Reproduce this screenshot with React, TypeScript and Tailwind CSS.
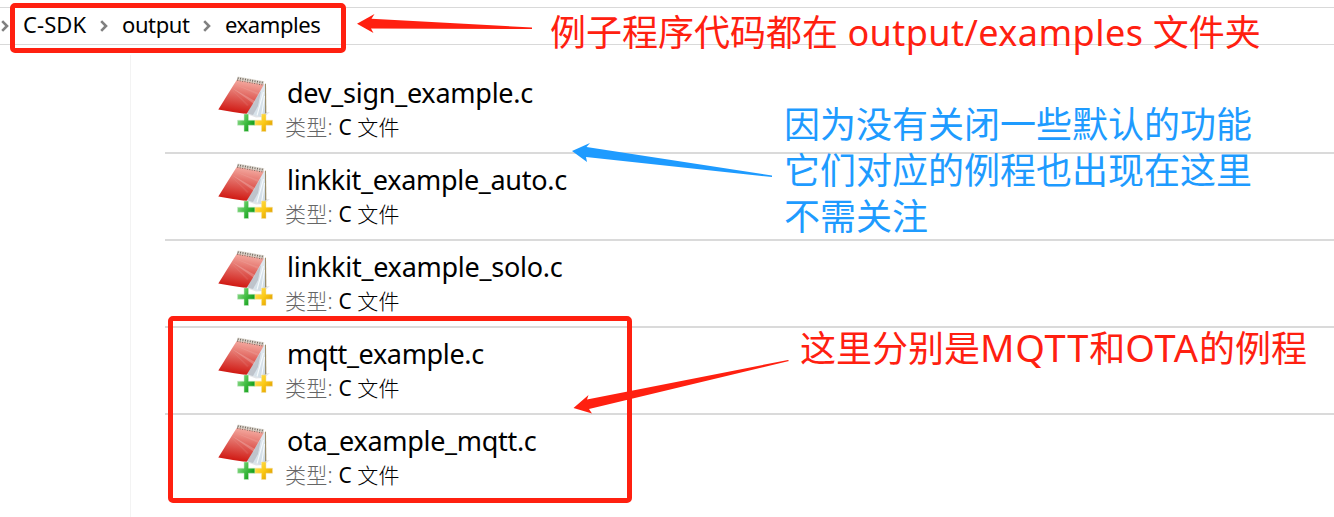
import type { ReactNode } from "react";

type FileEntry = { name: string; tracking: string };

const files: FileEntry[] = [
  { name: "dev_sign_example.c", tracking: "tracking-[-0.25px]" },
  { name: "linkkit_example_auto.c", tracking: "tracking-[-0.3px]" },
  { name: "linkkit_example_solo.c", tracking: "tracking-[-0.25px]" },
  { name: "mqtt_example.c", tracking: "tracking-[-0.35px]" },
  { name: "ota_example_mqtt.c", tracking: "tracking-[-0.3px]" },
];

function Gradients() {
  return (
    <svg className="absolute h-0 w-0" aria-hidden="true">
      <defs>
        <linearGradient id="cover" x1="0.6" y1="0" x2="0.4" y2="1">
          <stop offset="0" stopColor="#f5b0a6" />
          <stop offset="0.5" stopColor="#e0625b" />
          <stop offset="1" stopColor="#cf130d" />
        </linearGradient>
        <linearGradient id="pages" x1="0" y1="0" x2="1" y2="1">
          <stop offset="0" stopColor="#9fb4c4" />
          <stop offset="0.5" stopColor="#dfe8ef" />
          <stop offset="1" stopColor="#cbd8e2" />
        </linearGradient>
        <linearGradient id="green" x1="0" y1="0" x2="1" y2="0.6">
          <stop offset="0" stopColor="#9fe09f" />
          <stop offset="0.5" stopColor="#4cc24c" />
          <stop offset="1" stopColor="#0c9a14" />
        </linearGradient>
        <linearGradient id="gold" x1="0" y1="0" x2="1" y2="0.8">
          <stop offset="0" stopColor="#ffe566" />
          <stop offset="0.55" stopColor="#fbc916" />
          <stop offset="1" stopColor="#dd9c00" />
        </linearGradient>
      </defs>
    </svg>
  );
}

function NotepadIcon() {
  return (
    <svg viewBox="0 0 56 57" className="h-[57px] w-14 shrink-0">
      <path d="M30 38.500 L52 36 L46 41 L38 41.500 Z" fill="#dcdfe2" opacity=".8" />
      <path d="M47 7.500 L48 8 L48.300 37 L46.500 38 Z" fill="#8d7a4c" />
      <path d="M45 9 L47.200 8 L47.200 37 L43 41 L28 37 Z" fill="url(#pages)" />
      <path d="M45.500 16 L39 39.500 M46.500 20 L43.500 40" stroke="#f6fafc" strokeWidth="1.100" />
      <path d="M43 15 L28 37.200 L35 39 L40 30 Z" fill="#b4b8c0" opacity=".75" />
      <path d="M19 3.500 L46 8.200 Q38 23 28.500 38 Q14 36 0.300 33.500 Z" fill="url(#cover)" />
      <path d="M14 12 L37 25 L36 28 Z" fill="#fff" opacity=".22" />
      <path d="M18 9 L41 17 L40 19 Z" fill="#fff" opacity=".1" />
      <path d="M13 13 L31 29 L29 30 Z" fill="#fff" opacity=".08" />
      <path d="M19.500 2 L46 6.800" stroke="#ded9d1" strokeWidth="3" />
      <path d="M19.500 3 L46 7.800" stroke="#6f655c" strokeWidth="3.600" strokeDasharray="1 1.450" />
      <path d="M20 3.500 L45.500 8.100" stroke="#d8c8bd" strokeWidth="1" />
      <path d="M26 38 h4.500 v6.200 h6.500 v5 h-6.500 v6.300 h-4.500 V49.200 h-6.500 v-5 H26 Z" fill="url(#green)" stroke="#c8e8c8" strokeWidth=".5" />
      <path d="M43.500 38 h4.500 v6.200 h6.500 v5 h-6.500 v6.300 h-4.500 V49.200 H37 v-5 h6.500 Z" fill="url(#gold)" stroke="#f3dfa4" strokeWidth=".5" />
    </svg>
  );
}

function Chevron() {
  return (
    <svg viewBox="0 0 8 12" className="h-3 w-2 shrink-0" fill="none" stroke="#808080" strokeWidth="2.600">
      <path d="M1.200 1.200 L6 6 L1.200 10.800" />
    </svg>
  );
}

function Note({ className, children }: { className: string; children: ReactNode }) {
  return <div className={"absolute whitespace-nowrap text-[36px] " + className}>{children}</div>;
}

export default function App() {
  return (
    <div className="relative flex h-[517px] w-[1334px] flex-col overflow-hidden bg-white pt-[7px] font-['Noto_Sans','Noto_Sans_CJK_SC',sans-serif] text-black">
      <Gradients />
      <nav className="flex h-[38px] shrink-0 items-center border-y border-[#d9d9d9] text-[22px]">
        <div className="flex w-[23px] pl-px"><Chevron /></div>
        <span className="w-[77px] whitespace-nowrap pb-[3px] tracking-[0.1px]">C-SDK</span>
        <div className="w-[22px]"><Chevron /></div>
        <span className="w-[81px] whitespace-nowrap pb-[3px] tracking-[-0.4px]">output</span>
        <div className="w-[22px]"><Chevron /></div>
        <span className="whitespace-nowrap pb-[3px] tracking-[-0.4px]">examples</span>
      </nav>
      <div className="flex min-h-0 flex-1">
        <aside className="mt-[10px] w-[131px] shrink-0 border-r border-[#f3f3f3]" />
        <main className="ml-[34px] flex-1 pt-[22px]">
          {files.map((f) => (
            <div key={f.name} className="flex h-[87px] items-start border-b-2 border-[#dadada] pl-[53px] pt-[9px] last:border-b-0">
              <NotepadIcon />
              <div className="flex flex-col pl-[12px]">
                <span className={"h-[34px] whitespace-nowrap pl-px text-[27px] leading-[33px] " + f.tracking}>{f.name}</span>
                <span className="-ml-px h-[34px] whitespace-nowrap text-[21px] leading-[34px]">
                  <span className="font-light tracking-[0.2px] text-[#666]">类型: </span>
                  <span>C </span>
                  <span className="font-light tracking-[0.3px]">文件</span>
                </span>
              </div>
            </div>
          ))}
        </main>
      </div>
      <div className="absolute left-[10px] top-[3px] h-[50px] w-[336px] rounded-[5px] border-[5px] border-[#ff2010]" />
      <div className="absolute left-[168px] top-[316px] h-[187px] w-[464px] rounded-[5px] border-[5px] border-[#ff2010]" />
      <svg className="absolute left-0 top-0 h-[517px] w-[1334px]" viewBox="0 0 1334 517">
        <path d="M357 23.700 L374.500 14 L371.500 18.700 L532 27.500 L532 29 L371 28.500 L373.500 33 Z" fill="#ff2010" />
        <path d="M572 151 L590 143 L586.500 147 L772 175.500 L772 177 L586 157 L587 162 Z" fill="#1e9bff" />
        <path d="M573.500 408 L588.500 395 L587 399.500 L788 360 L789 361 L589 409 L592 413.500 Z" fill="#ff2010" />
      </svg>
      <Note className="left-[550px] top-[8px] leading-[50px] text-[#ff2010]">
        例子程序代码都在 <span className="tracking-[0.45px]">output/examples</span> 文件夹
      </Note>
      <Note className="left-[784px] top-[102px] leading-[46px] text-[#1e9bff]">
        <div>因为没有关闭一些默认的功能</div>
        <div>它们对应的例程也出现在这里</div>
        <div>不需关注</div>
      </Note>
      <Note className="left-[800px] top-[322px] leading-[50px] text-[#ff2010]">
        这里分别是<span className="text-[38px] tracking-[0.8px]">MQTT</span>和<span className="text-[38px] tracking-[0.8px]">OTA</span>的例程
      </Note>
    </div>
  );
}
